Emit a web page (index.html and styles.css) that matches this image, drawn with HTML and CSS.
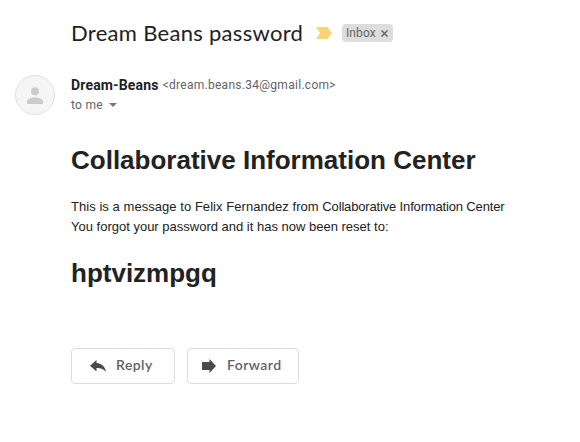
FILE: index.html
```html
<!DOCTYPE html>
<html lang="en">
<head>
<meta charset="utf-8">
<title>Dream Beans password</title>
<link rel="stylesheet" href="styles.css">
</head>
<body>
<header class="subject-row">
  <h1 class="subject">Dream Beans password</h1>
  <svg class="marker" width="16" height="12" viewBox="0 0 16 12"><path d="M0 0h11.500L16 6l-4.500 6H0l4-6z" fill="#f8d472"/></svg>
  <span class="label"><span class="label-name">Inbox</span><svg width="7" height="7" viewBox="0 0 7 7"><path d="M.5.500l6 6M6.500.500l-6 6" stroke="#666" stroke-width="1.500"/></svg></span>
</header>
<section class="sender-row">
  <div class="avatar"><svg width="16" height="17" viewBox="0 0 16 17" fill="#cbcbcb"><circle cx="8" cy="4.200" r="4"/><path d="M0 17v-2.500c0-2.700 5-4 8-4s8 1.300 8 4V17z"/></svg></div>
  <div class="sender">
    <div class="from"><strong>Dream-Beans</strong><span class="email">&lt;dream.beans.34@gmail.com&gt;</span></div>
    <div class="to">to me<svg width="8" height="4" viewBox="0 0 8 4"><path d="M0 0h8L4 4z" fill="#777"/></svg></div>
  </div>
</section>
<main class="message">
  <h2>Collaborative Information Center</h2>
  <p><span class="recipient">This is a message to Felix Fernandez from </span><span class="source">Collaborative Information Center</span><br>You forgot your password and it has now been reset to:</p>
  <h2 class="code">hptvizmpgq</h2>
</main>
<footer class="actions">
  <button class="reply"><svg width="16" height="12" viewBox="0 0 16 12"><path d="M6.500 3V0L0 5.800l6.500 5.700V8c4.300-.2 7.200 1 9.500 4-.8-5.200-4-8.500-9.500-9z" fill="#4a4a4a"/></svg><span>Reply</span></button>
  <button class="forward"><svg width="14" height="14" viewBox="0 0 14 14"><path d="M0 3h7.500V0L14 7l-6.500 7v-3H0z" fill="#4a4a4a"/></svg><span>Forward</span></button>
</footer>
</body>
</html>
```
FILE: styles.css
```css
* { box-sizing: border-box; }
body { margin: 0; width: 580px; height: 442px; background: #fff; color: #202124; font-family: "Liberation Sans", sans-serif; }
h1, h2, p { margin: 0; }
svg { display: block; flex: none; }
.subject-row { display: flex; align-items: center; height: 67px; padding: 0 0 1px 71px; }
.subject { width: 232px; font: 400 22px/28px Lato, sans-serif; letter-spacing: .3px; white-space: nowrap; }
.marker { margin-left: 13px; }
.label { display: flex; align-items: center; gap: 5px; width: 51px; height: 18px; margin-left: 10px; padding-left: 4px; border-radius: 4px; background: #ddd; color: #666; font: 12px/18px Roboto, sans-serif; letter-spacing: .1px; }
.sender-row { display: flex; height: 74px; padding: 8px 0 0 15px; }
.avatar { display: flex; align-items: center; justify-content: center; width: 40px; height: 40px; border: 1px solid #e0e0e0; border-radius: 50%; background: #f5f5f5; }
.sender { margin-left: 16px; font-family: Roboto, sans-serif; }
.from { display: flex; align-items: center; height: 20px; font-size: 14px; letter-spacing: .16px; }
.email { margin-left: 4px; color: #5f6368; font-size: 12px; letter-spacing: .28px; }
.to { display: flex; align-items: center; gap: 6px; height: 20px; color: #5f6368; font-size: 12px; letter-spacing: .3px; }
.message { height: 207px; padding-left: 71px; color: #222; }
.message h2 { font-size: 26px; line-height: 38px; }
.message p { margin-top: 18px; font-size: 13px; line-height: 20px; white-space: nowrap; }
.recipient { letter-spacing: .05px; }
.source { letter-spacing: -.16px; }
.message .code { margin-top: 17px; }
.actions { display: flex; gap: 12px; padding-left: 71px; }
button { display: flex; align-items: center; height: 36px; padding: 0; border: 1px solid #dadce0; border-radius: 4px; background: #fff; color: #5f6368; font: 600 14px/18px Lato, sans-serif; letter-spacing: .45px; }
button span { margin-top: -2px; }
.reply { width: 104px; padding-left: 18px; gap: 10px; }
.forward { width: 112px; padding-left: 14px; gap: 11px; }
```
